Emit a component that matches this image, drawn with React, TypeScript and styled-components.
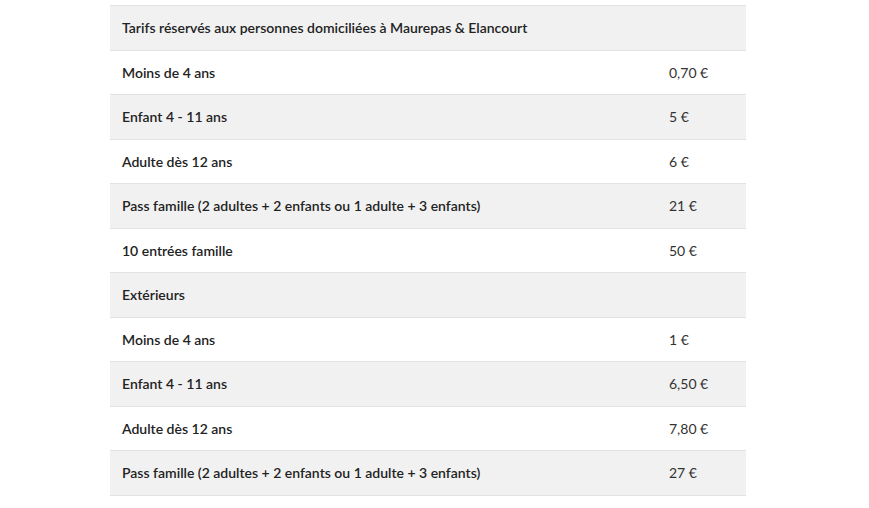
import React from 'react';
import styled, { createGlobalStyle } from 'styled-components';

interface Tarif {
  label: string;
  price?: string;
}

const rows: Tarif[] = [
  { label: 'Tarifs réservés aux personnes domiciliées à Maurepas & Elancourt' },
  { label: 'Moins de 4 ans', price: '0,70 €' },
  { label: 'Enfant 4 - 11 ans', price: '5 €' },
  { label: 'Adulte dès 12 ans', price: '6 €' },
  { label: 'Pass famille (2 adultes + 2 enfants ou 1 adulte + 3 enfants)', price: '21 €' },
  { label: '10 entrées famille', price: '50 €' },
  { label: 'Extérieurs' },
  { label: 'Moins de 4 ans', price: '1 €' },
  { label: 'Enfant 4 - 11 ans', price: '6,50 €' },
  { label: 'Adulte dès 12 ans', price: '7,80 €' },
  { label: 'Pass famille (2 adultes + 2 enfants ou 1 adulte + 3 enfants)', price: '27 €' },
];

const GlobalStyle = createGlobalStyle`
  body {
    margin: 0;
    background: #fff;
    font-family: Lato, "Open Sans", sans-serif;
  }
`;

const Page = styled.div`
  padding: 5px 0 0 110px;
`;

const Table = styled.table`
  width: 636px;
  border-collapse: collapse;
  font-size: 14px;
`;

const Row = styled.tr<{ striped: boolean }>`
  background-color: ${({ striped }) => (striped ? '#f1f1f1' : '#fff')};
  border-top: 1px solid #e2e2e2;
  border-bottom: 1px solid #e2e2e2;
`;

const Label = styled.td`
  width: 523px;
  padding: 12px;
  line-height: 19.55px;
  font-weight: 600;
  color: #222;
  text-align: left;
`;

const Price = styled.td`
  padding: 12px;
  line-height: 19.55px;
  color: #333;
  text-align: left;
`;

const App: React.FC = () => (
  <>
    <GlobalStyle />
    <Page>
      <Table>
        <tbody>
          {rows.map((row, i) => (
            <Row key={i} striped={i % 2 === 0}>
              <Label>{row.label}</Label>
              <Price>{row.price}</Price>
            </Row>
          ))}
        </tbody>
      </Table>
    </Page>
  </>
);

export default App;
